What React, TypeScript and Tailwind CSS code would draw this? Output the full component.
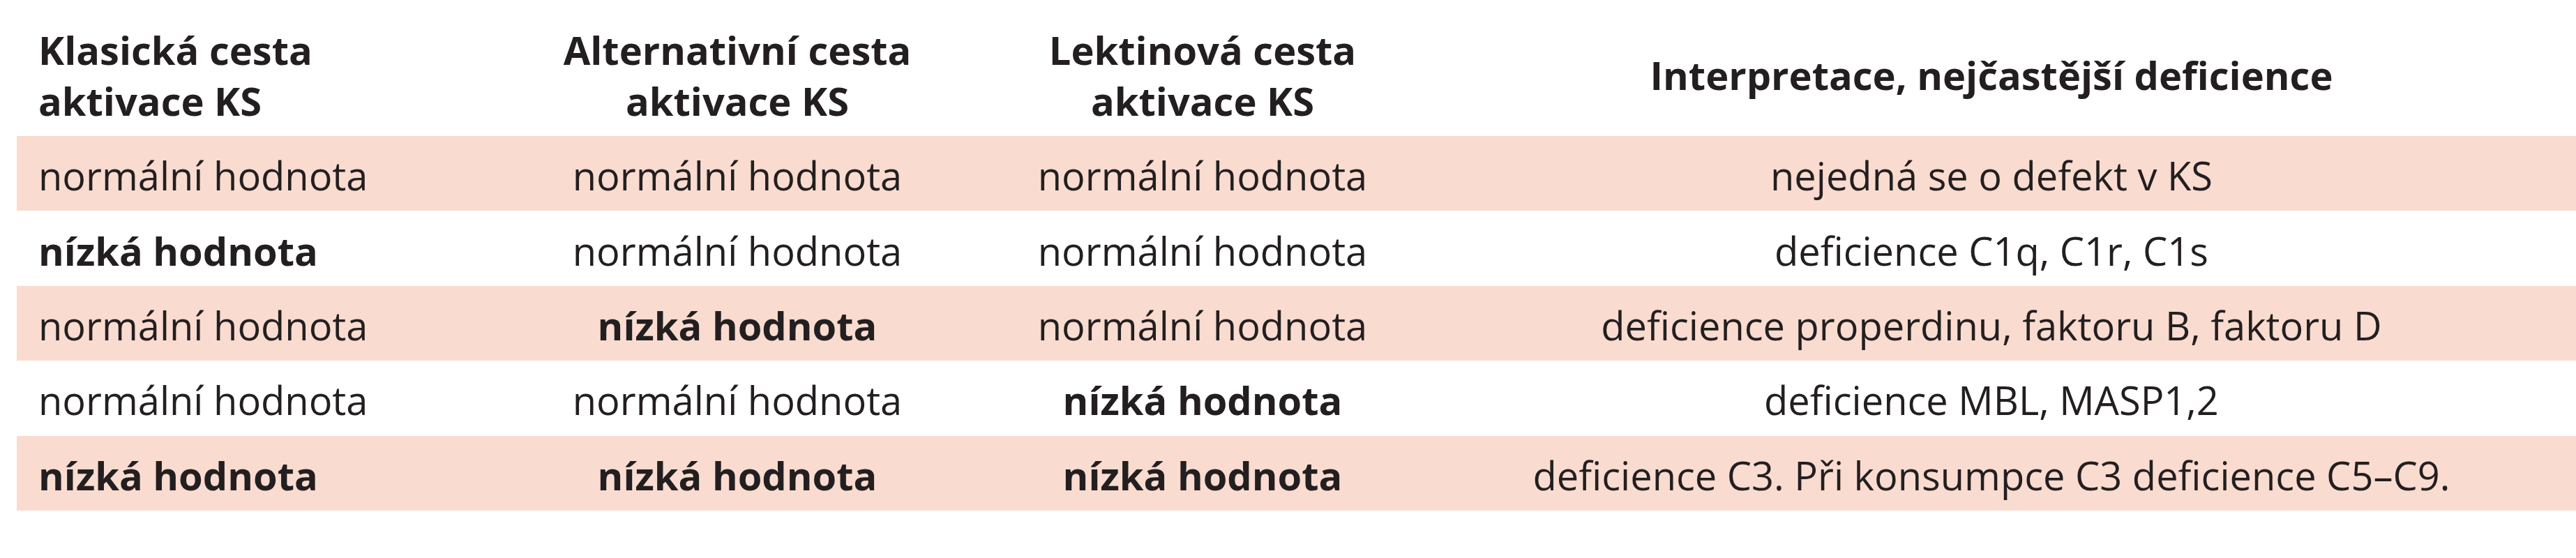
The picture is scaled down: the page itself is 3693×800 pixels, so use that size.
const rows = [
  {
    cells: ["normální hodnota", "normální hodnota", "normální hodnota"],
    low: [false, false, false],
    note: "nejedná se o defekt v KS",
  },
  {
    cells: ["nízká hodnota", "normální hodnota", "normální hodnota"],
    low: [true, false, false],
    note: "deficience C1q, C1r, C1s",
  },
  {
    cells: ["normální hodnota", "nízká hodnota", "normální hodnota"],
    low: [false, true, false],
    note: "deficience properdinu, faktoru B, faktoru D",
  },
  {
    cells: ["normální hodnota", "normální hodnota", "nízká hodnota"],
    low: [false, false, true],
    note: "deficience MBL, MASP1,2",
  },
  {
    cells: ["nízká hodnota", "nízká hodnota", "nízká hodnota"],
    low: [true, true, true],
    note: "deficience C3. Při konsumpce C3 deficience C5–C9.",
  },
];

const grid = "grid grid-cols-[697px_672px_662px_1600px]";

export default function App() {
  return (
    <div className="w-[3693px] h-[800px] bg-white pl-[24px] font-['Open_Sans',sans-serif] text-[56px] leading-[73px] text-[#231f20]">
      <div className={`${grid} h-[195px] pt-[34px] pb-[14px] font-bold`}>
        <div className="flex items-center pl-[31px]">
          Klasická cesta
          <br />
          aktivace KS
        </div>
        <div className="flex items-center justify-center text-center">
          Alternativní cesta
          <br />
          aktivace KS
        </div>
        <div className="flex items-center justify-center text-center">
          Lektinová cesta
          <br />
          aktivace KS
        </div>
        <div className="flex items-center justify-center text-center">
          Interpretace, nejčastější deficience
        </div>
      </div>
      {rows.map((row, i) => (
        <div
          key={i}
          className={`${grid} h-[107.4px] pt-[5px] leading-[76px] ${
            i % 2 === 0 ? "bg-[#f9dbd0]" : ""
          }`}
        >
          {row.cells.map((c, j) => (
            <div
              key={j}
              className={`flex items-center ${
                j === 0 ? "pl-[31px]" : "justify-center"
              } ${row.low[j] ? "font-bold" : ""}`}
            >
              {c}
            </div>
          ))}
          <div className="flex items-center justify-center">{row.note}</div>
        </div>
      ))}
    </div>
  );
}
